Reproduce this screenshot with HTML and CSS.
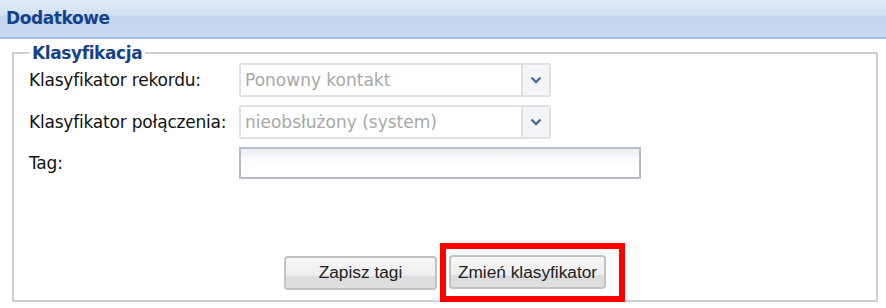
FILE: index.html
```html
<!DOCTYPE html>
<html lang="pl">
<head>
    <meta charset="UTF-8">
    <title>Dodatkowe</title>
    <link rel="stylesheet" href="styles.css">
</head>
<body>
    <div class="panel">
        <div class="panel-header">Dodatkowe</div>

        <fieldset class="group">
            <legend>Klasyfikacja</legend>

            <div class="row">
                <label>Klasyfikator rekordu:</label>
                <div class="combo">
                    <span class="combo-text">Ponowny kontakt</span>
                    <span class="combo-trigger">
                        <svg width="12" height="8" viewBox="0 0 12 8"><path d="M1.5 1.5 L6 6 L10.5 1.5" fill="none" stroke="#4a6d9c" stroke-width="2.4"/></svg>
                    </span>
                </div>
            </div>

            <div class="row">
                <label>Klasyfikator połączenia:</label>
                <div class="combo">
                    <span class="combo-text">nieobsłużony (system)</span>
                    <span class="combo-trigger">
                        <svg width="12" height="8" viewBox="0 0 12 8"><path d="M1.5 1.5 L6 6 L10.5 1.5" fill="none" stroke="#4a6d9c" stroke-width="2.4"/></svg>
                    </span>
                </div>
            </div>

            <div class="row">
                <label>Tag:</label>
                <input class="text-field" type="text">
            </div>

            <div class="actions">
                <button class="btn">Zapisz tagi</button>
                <div class="highlight">
                    <button class="btn">Zmień klasyfikator</button>
                </div>
            </div>
        </fieldset>
    </div>
</body>
</html>
```

FILE: styles.css
```css
body {
    margin: 0;
    background: #fff;
    font-family: Tahoma, "DejaVu Sans", sans-serif;
}
.panel {
    width: 886px;
    height: 308px;
    overflow: hidden;
}
.panel-header {
    height: 37px;
    line-height: 37px;
    padding-left: 6px;
    font-size: 17px;
    font-weight: bold;
    color: #15428b;
    background: linear-gradient(to bottom, #e0eaf6 0%, #d3e1f3 40%, #c2d6ef 45%, #c9dbf1 100%);
    border-bottom: 2px solid #a3c0e8;
    letter-spacing: -0.4px;
}
.group {
    margin: 6px 8px 0 12px;
    padding: 0 0 0 15px;
    height: 257px;
    box-sizing: border-box;
    border: 2px solid #cfd0d6;
}
.group legend {
    padding: 0 3px;
    margin-left: 0;
    font-size: 17px;
    font-weight: bold;
    color: #15428b;
    letter-spacing: -0.4px;
    line-height: 16px;
}
.row {
    display: flex;
    align-items: center;
    margin-top: 8px;
}
.row:first-of-type {
    margin-top: 2px;
}
.row label {
    width: 210px;
    font-size: 17px;
    color: #111;
    letter-spacing: -0.2px;
}
.combo {
    display: flex;
    width: 308px;
    height: 30px;
    border: 2px solid #e0e1e7;
    border-radius: 2px;
    background: #fff;
}
.combo-text {
    flex: 1;
    padding-left: 4px;
    line-height: 30px;
    font-size: 17px;
    color: #a8a8a8;
}
.combo-trigger {
    width: 26px;
    display: flex;
    align-items: center;
    justify-content: center;
    border-left: 2px solid #e0e1e7;
    background: #f4f5f8;
}
.text-field {
    width: 398px;
    height: 28px;
    box-sizing: content-box;
    padding: 0;
    border: 2px solid #b7b9cc;
    background: linear-gradient(to bottom, #eceef2 0%, #fff 50%);
}
.actions {
    display: flex;
    align-items: center;
    margin-top: 64px;
    padding-left: 255px;
}
.btn {
    height: 34px;
    font-family: "Liberation Sans", Arial, sans-serif;
    font-size: 17.3px;
    color: #222;
    border: 2px solid #c2c2c2;
    border-radius: 4px;
    background: linear-gradient(to bottom, #f7f7f7 0%, #ededed 60%, #dcdcdc 62%, #e0e0e0 100%);
    padding: 0;
}
.actions > .btn {
    width: 153px;
}
.highlight {
    margin-left: 3px;
    padding: 6px 13px 7px 3px;
    border: 6px solid #ff0000;
}
.highlight .btn {
    width: 157px;
}
```
